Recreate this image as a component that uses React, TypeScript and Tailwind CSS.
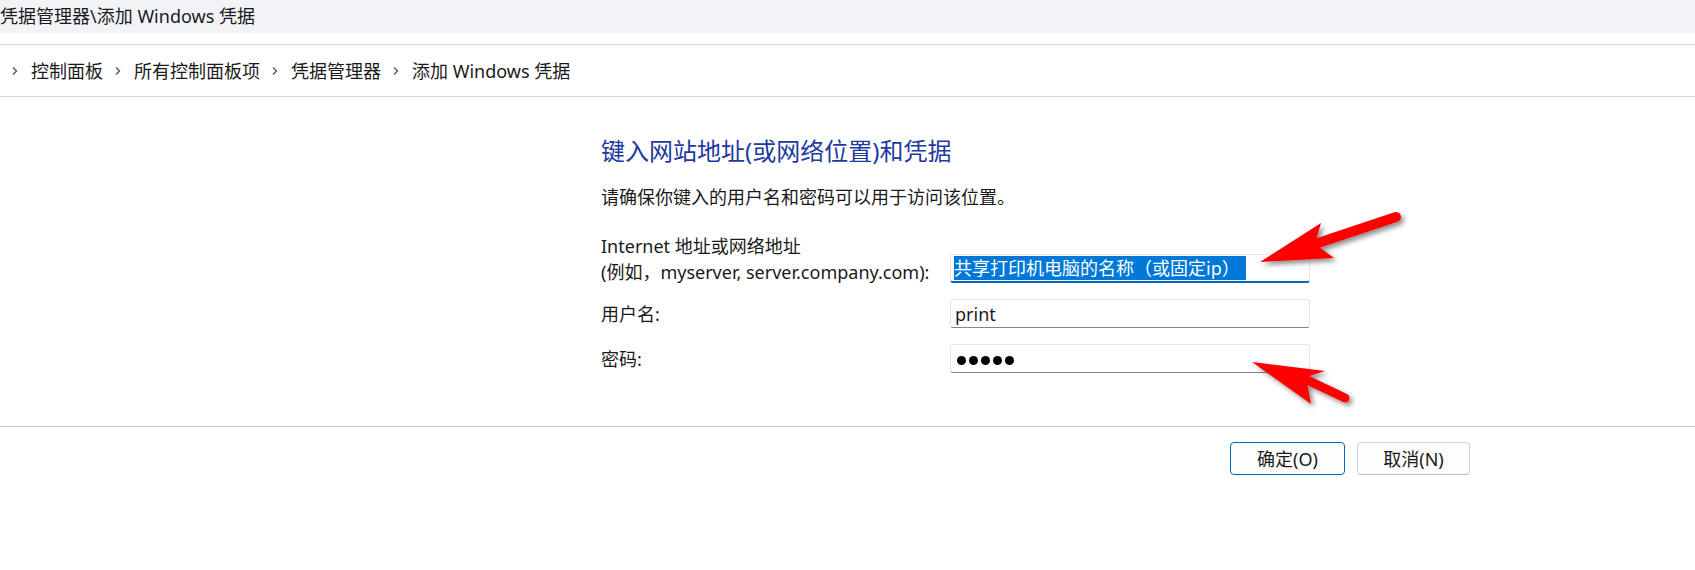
import React from "react";

const crumbs = ["控制面板", "所有控制面板项", "凭据管理器", "添加 Windows 凭据"];

function Chevron() {
	return (
		<svg width="9" height="12" viewBox="0 0 9 12" className="ml-[10px] mr-[12px] shrink-0">
			<path d="M3 2.5 L6.5 6 L3 9.5" fill="none" stroke="#555" strokeWidth="1.4" />
		</svg>
	);
}

function Arrows() {
	return (
		<svg
			className="pointer-events-none absolute left-0 top-0"
			width="1695"
			height="570"
			viewBox="0 0 1695 570"
		>
			<defs>
				<filter id="shadow" x="-20%" y="-20%" width="140%" height="140%">
					<feDropShadow dx="3" dy="3" stdDeviation="2.5" floodColor="#000" floodOpacity="0.45" />
				</filter>
			</defs>
			<g filter="url(#shadow)" fill="#ff0000">
				{/* top arrow */}
				<line x1="1312" y1="245" x2="1396" y2="217" stroke="#ff0000" strokeWidth="10" strokeLinecap="round" />
				<polygon points="1260,262 1321,223 1315,244 1334,258" />
				{/* bottom arrow */}
				<line x1="1303" y1="378" x2="1345" y2="398" stroke="#ff0000" strokeWidth="9" strokeLinecap="round" />
				<polygon points="1252,362 1325,371 1306,377 1311,404" />
			</g>
		</svg>
	);
}

export default function App() {
	return (
		<div className="relative h-[570px] w-full overflow-hidden bg-white font-['Noto_Sans','Noto_Sans_CJK_SC',sans-serif] text-[18px] text-[#1a1a1a]">
			{/* window title */}
			<div className="flex h-[33px] items-center bg-[#f2f3f7] pb-[1px] leading-[24px]">
				凭据管理器\添加 Windows 凭据
			</div>

			{/* address bar */}
			<div className="mt-[11px] flex h-[53px] items-center border-y border-[#d9d9d9] leading-[24px]">
				{crumbs.map((c) => (
					<span key={c} className="flex items-center">
						<Chevron />
						<span>{c}</span>
					</span>
				))}
			</div>

			{/* content */}
			<div className="pl-[601px] pt-[38px]">
				<h1 className="text-[24px] leading-[32px] text-[#1e3a9f]">
					键入网站地址(或网络位置)和凭据
				</h1>
				<p className="mt-[17px] leading-[26px]">请确保你键入的用户名和密码可以用于访问该位置。</p>

				<div className="mt-[23px] flex flex-col">
					<div className="flex items-end">
						<div className="w-[349px] leading-[26px]">
							<div>Internet 地址或网络地址</div>
							<div>(例如，myserver, server.company.com):</div>
						</div>
						<div className="mb-[2px] flex h-[29px] w-[360px] items-center rounded-[3px] border border-b-2 border-[#e5e5e5] border-b-[#0067c0] pl-[3px]">
							<span className="bg-[#0078d7] pr-[6px] leading-[24px] text-white">
								共享打印机电脑的名称（或固定ip）
							</span>
						</div>
					</div>

					<div className="mt-[14px] flex items-center">
						<div className="w-[349px] leading-[26px]">用户名:</div>
						<div className="flex h-[29px] w-[360px] items-center rounded-[3px] border border-[#e5e5e5] border-b-[#868686] pl-[4px] leading-[24px]">
							print
						</div>
					</div>

					<div className="mt-[16px] flex items-center">
						<div className="w-[349px] leading-[26px]">密码:</div>
						<div className="flex h-[29px] w-[360px] items-center gap-[3px] rounded-[3px] border border-[#e5e5e5] border-b-[#868686] pl-[6px] pt-[4px]">
							<span className="h-[9px] w-[9px] rounded-full bg-black" />
							<span className="h-[9px] w-[9px] rounded-full bg-black" />
							<span className="h-[9px] w-[9px] rounded-full bg-black" />
							<span className="h-[9px] w-[9px] rounded-full bg-black" />
							<span className="h-[9px] w-[9px] rounded-full bg-black" />
						</div>
					</div>
				</div>
			</div>

			{/* footer */}
			<div className="mt-[53px] border-t border-[#cccccc]">
				<div className="flex justify-end gap-[12px] pr-[225px] pt-[15px]">
					<button className="h-[33px] w-[115px] rounded-[4px] border border-[#0067c0] bg-[#fdfdfd] leading-[24px]">
						确定(O)
					</button>
					<button className="h-[33px] w-[113px] rounded-[4px] border border-[#d0d0d0] border-b-[#bdbdbd] bg-[#fdfdfd] leading-[24px]">
						取消(N)
					</button>
				</div>
			</div>

			<Arrows />
		</div>
	);
}
